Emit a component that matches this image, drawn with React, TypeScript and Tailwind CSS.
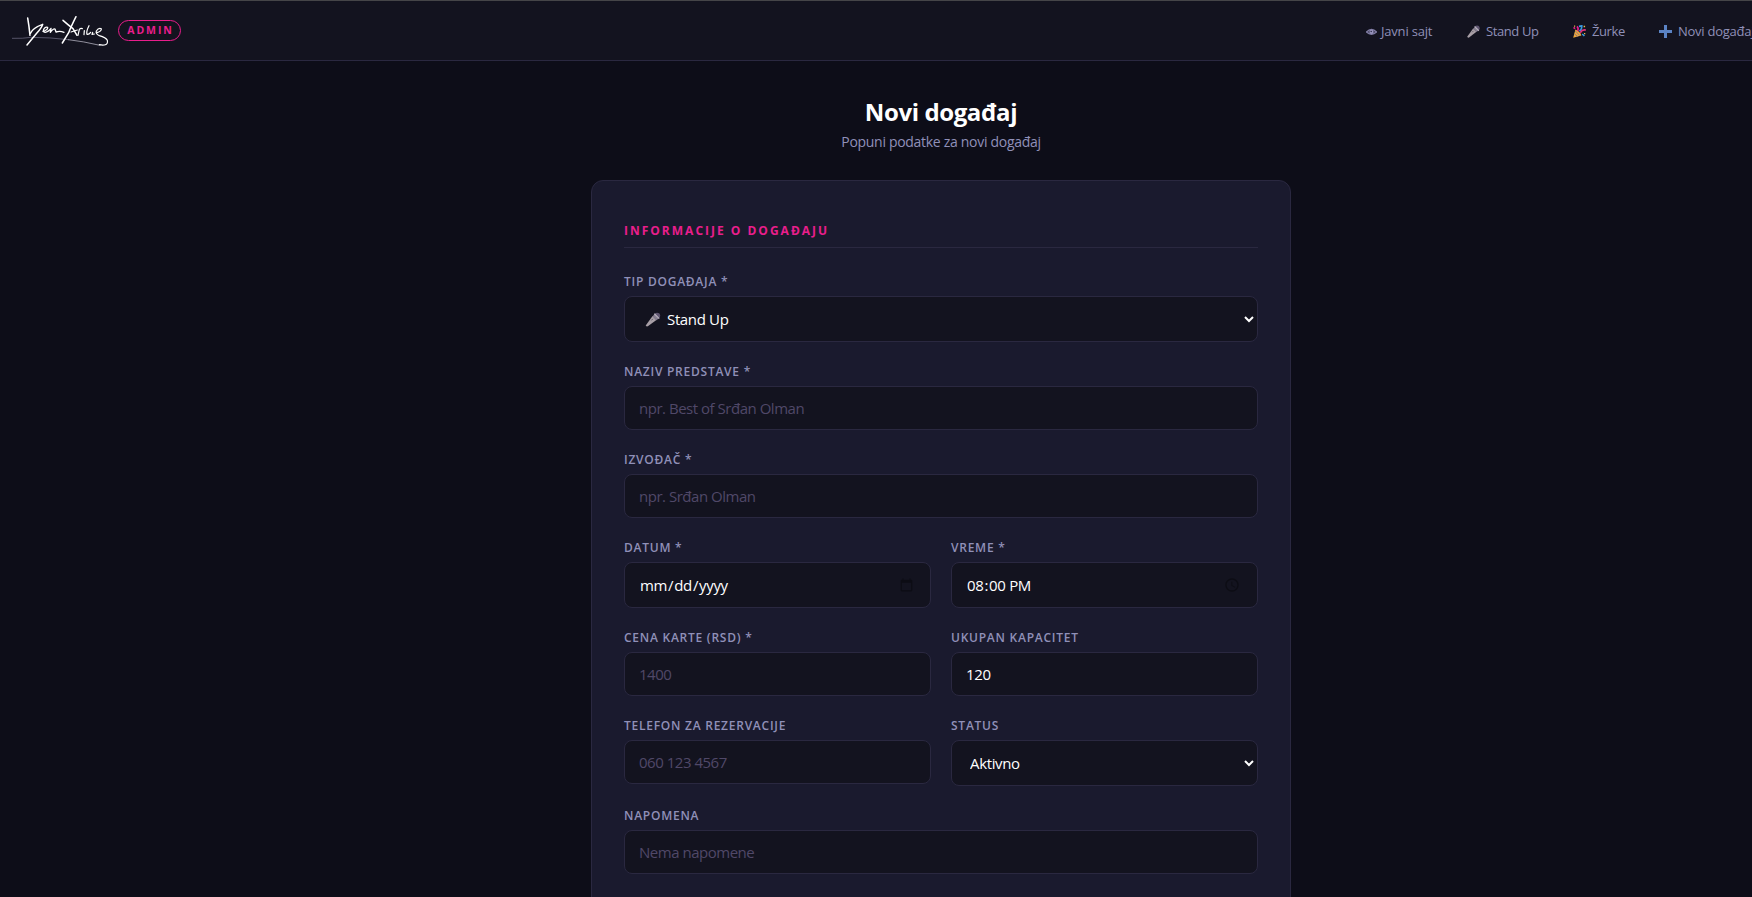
import type { ReactNode } from "react";

function Signature() {
  return (
    <svg
      className="h-[33px] w-[98px] shrink-0"
      viewBox="36 42 294 99"
      fill="none"
      strokeLinecap="round"
      strokeLinejoin="round"
      stroke="#fff"
    >
      <path strokeWidth="2" stroke="#77748c" d="M37 115 Q70 116 92 112 Q150 112 205 119" />
      <path strokeWidth="2.4" stroke="#b0aebd" d="M205 119 Q250 124 300 136" />
      <path strokeWidth="4.5" d="M83 54 Q87 76 90 106" />
      <path strokeWidth="4.5" d="M91 100 Q98 84 128 73 Q126 82 110 100 L81 135" />
      <path
        strokeWidth="4"
        d="M129 94 Q144 90 143 82 Q133 79 130 92 Q132 102 147 92 L153 85 L151 97 Q160 85 165 87 L168 96 Q180 92 192 97"
      />
      <path strokeWidth="4.5" d="M189 61 Q206 76 219 86 L231 106" />
      <path strokeWidth="4.5" d="M228 50 Q212 82 206 98 L187 129" />
      <path
        strokeWidth="3.6"
        d="M213 96 L232 90 M234 106 L238 88 Q242 84 247 86 M253 92 L252 104 M267 77 Q258 94 261 103 Q267 104 272 97 M278 97 L276 103 L283 102"
      />
      <path
        strokeWidth="3.6"
        d="M291 98 Q305 94 304 86 Q296 82 289 93 Q286 102 298 107 Q318 113 322 121 Q325 133 313 135 Q306 136 298 134"
      />
    </svg>
  );
}

function EyeIcon() {
  return (
    <svg className="h-[13px] w-[11px]" viewBox="0 0 11 13" fill="none">
      <path d="M.4 7 Q5.5 1.6 10.6 7 Q5.5 11.6 .4 7Z" fill="#3f3c58" stroke="#817da4" strokeWidth="1.2" />
      <circle cx="5.5" cy="6.9" r="2.1" fill="#9a96c0" />
      <circle cx="5.2" cy="6.5" r=".8" fill="#33314a" />
    </svg>
  );
}

function MicIcon({ className }: { className: string }) {
  return (
    <svg className={className} viewBox="0 0 14 14">
      <path d="M1.2 13.6 L.2 12.6 L6.6 3.8 L10.2 7.4 L2.2 13.4Z" fill="#a89fa6" />
      <path d="M6.6 4 L8.4 2.2 L12.2 6 L10.3 7.6Z" fill="#857d90" />
      <path d="M8.2 2 Q10.2 -.2 12.8 1.1 Q14.8 3.8 12.4 6.2Z" fill="#5e5570" />
      <path d="M8.2 1.6 L12.8 6.2" stroke="#bab3be" strokeWidth="1.2" />
      <path d="M5.6 7.8 L6.8 6.4" stroke="#5c5664" strokeWidth=".9" />
    </svg>
  );
}

function PartyIcon() {
  return (
    <svg className="h-[13px] w-[13px]" viewBox="0 0 13 13">
      <path d="M.2 12.8 L2.4 4.6 Q6.6 6 8.4 10.4Z" fill="#eda63a" />
      <path d="M1.4 8.8 L4.8 11.6 M2.4 6 L6.8 10.6" stroke="#8a7a80" strokeWidth="1" />
      <path d="M4.6 6 Q6 3.6 4 1.4 M.6 2.4 L2 3.8" stroke="#e91e8c" strokeWidth="1.6" fill="none" />
      <path d="M6 1.4 L8.8 .8 Q9 4.6 6.4 6 M9.2 9 L11.4 11" stroke="#3b9ae0" strokeWidth="1.6" fill="none" />
      <path d="M7.2 7.8 Q9.4 4.2 12.8 5.2" stroke="#e0307c" strokeWidth="1.7" fill="none" />
      <path d="M10.6 .8 h1.5 v1.5 h-1.5z M11 8 h1.3 v1.3 h-1.3z M1 .6 h1.2 v1.2 h-1.2z" fill="#e6b34a" />
    </svg>
  );
}

function PlusIcon() {
  return (
    <svg className="h-[13px] w-[13px]" viewBox="0 0 13 13">
      <path d="M5 0 h3 v5 h5 v3 h-5 v5 h-3 v-5 h-5 v-3 h5z" fill="#5b83c4" />
    </svg>
  );
}

const links = [
  { label: "Javni sajt", icon: <EyeIcon />, className: "gap-[4px] w-[67px] tracking-[-0.2px]" },
  { label: "Stand Up", icon: <MicIcon className="h-[13px] w-[13px]" />, className: "gap-[6px] w-[72px] tracking-[-0.4px]" },
  { label: "Žurke", icon: <PartyIcon />, className: "gap-[6px] w-[52px] tracking-[-0.4px]" },
  { label: "Novi događaj", icon: <PlusIcon />, className: "gap-[6px] tracking-[-0.25px]" },
];

const control =
  "block w-full rounded-lg border border-[#2a2840] bg-[#13131f] px-3.5 text-[15px] tracking-[-0.35px] text-white outline-none placeholder:tracking-[-0.48px] placeholder:text-[#504868] [&::-webkit-calendar-picker-indicator]:opacity-35";

function Field({ label, children }: { label: string; children: ReactNode }) {
  return (
    <div>
      <label className="mb-[5px] block h-[19px] pt-px text-[12px] leading-[18px] font-semibold tracking-[0.75px] text-[#9090b8] uppercase">
        {label}
      </label>
      {children}
    </div>
  );
}

export default function App() {
  return (
    <div className="h-[897px] w-full overflow-hidden bg-[#0d0d18] font-['Open_Sans','Noto_Sans',sans-serif] text-white">
      <header className="flex h-[61px] items-center overflow-hidden border-t border-b border-t-[#454548] border-b-[#2a2840] bg-[#13131f] pl-3">
        <Signature />
        <span className="ml-2 flex h-[21px] w-[63px] shrink-0 items-center justify-center rounded-full border border-[#e91e8c] pl-[2px] text-[10.5px] font-bold tracking-[1.9px] text-[#e91e8c]">
          ADMIN
        </span>
        <nav className="ml-[1185px] flex shrink-0 gap-[34px] pt-0.5 text-[13px] text-[#9090b8]">
          {links.map((link) => (
            <a
              key={link.label}
              href="#"
              className={`flex shrink-0 items-center whitespace-nowrap ${link.className}`}
            >
              <span className="shrink-0">{link.icon}</span>
              {link.label}
            </a>
          ))}
        </nav>
      </header>

      {/* the form is centered on the full 1882px canvas, wider than the window */}
      <main className="flex w-[1882px] flex-col items-center pt-[35px]">
        <h1 className="text-2xl leading-8 font-bold tracking-[-0.4px]">Novi događaj</h1>
        <p className="mt-1 text-[14px] leading-5 tracking-[-0.3px] text-[#9090b8]">
          Popuni podatke za novi događaj
        </p>

        <form className="mt-7 flex h-[800px] w-[700px] flex-col gap-5 rounded-xl border border-[#2a2840] bg-[#1a1a2e] px-8 pt-[41px]">
          <h2 className="mb-[4px] h-[26px] border-b border-[#2a2840] text-[12px] leading-[18px] font-bold tracking-[2px] text-[#e91e8c] uppercase">
            Informacije o događaju
          </h2>

          <Field label="Tip događaja *">
            <div className="relative">
              <select className={`${control} h-[46px] pl-[38px]`}>
                <option>Stand Up</option>
                <option>Žurka</option>
              </select>
              <MicIcon className="pointer-events-none absolute top-4 left-[21px] h-[15px] w-4" />
            </div>
          </Field>
          <Field label="Naziv predstave *">
            <input className={`${control} h-11`} placeholder="npr. Best of Srđan Olman" />
          </Field>
          <Field label="Izvođač *">
            <input className={`${control} h-11`} placeholder="npr. Srđan Olman" />
          </Field>

          <div className="grid grid-cols-2 gap-5">
            <Field label="Datum *">
              <input type="date" className={`${control} h-[46px]`} />
            </Field>
            <Field label="Vreme *">
              <input type="time" defaultValue="20:00" className={`${control} h-[46px]`} />
            </Field>
            <Field label="Cena karte (RSD) *">
              <input className={`${control} h-11`} placeholder="1400" />
            </Field>
            <Field label="Ukupan kapacitet">
              <input className={`${control} h-11`} defaultValue="120" />
            </Field>
            <Field label="Telefon za rezervacije">
              <input className={`${control} h-11`} placeholder="060 123 4567" />
            </Field>
            <Field label="Status">
              <select className={`${control} h-[46px]`}>
                <option>Aktivno</option>
                <option>Neaktivno</option>
              </select>
            </Field>
          </div>

          <Field label="Napomena">
            <input className={`${control} h-11`} placeholder="Nema napomene" />
          </Field>
        </form>
      </main>
    </div>
  );
}
